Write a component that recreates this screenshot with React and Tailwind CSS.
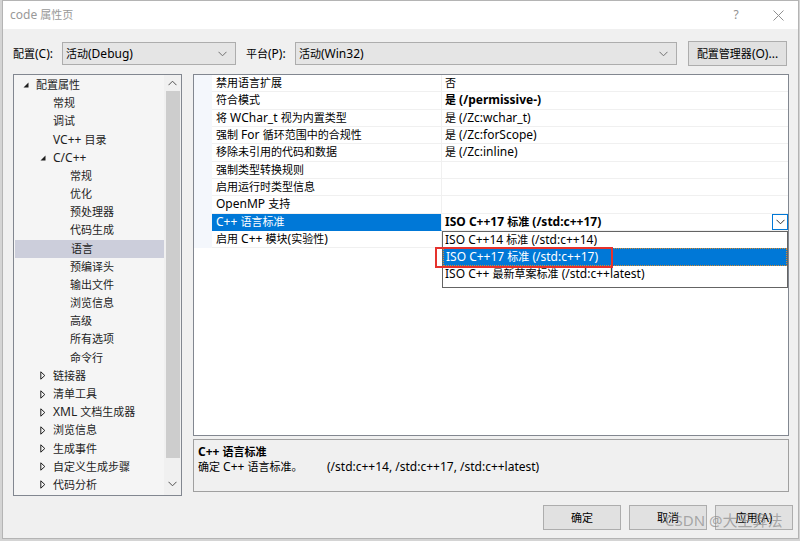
import React from "react";

const FONT = "font-['Noto_Sans','Noto_Sans_CJK_SC',sans-serif]";

function T({ children }) {
  const s = String(children);
  const parts = s.split(/([\u3000-\u303f\u4e00-\u9fff\uff00-\uffef]+)/);
  return (
    <>
      {parts.map((p, i) =>
        p === "" ? null : /[\u3000-\u303f\u4e00-\u9fff\uff00-\uffef]/.test(p) ? (
          <span key={i} className="text-[11px]">{p}</span>
        ) : (
          <span key={i}>{p}</span>
        )
      )}
    </>
  );
}

const tree = [
  { t: "配置属性", l: 0, a: "open" },
  { t: "常规", l: 1 },
  { t: "调试", l: 1 },
  { t: "VC++ 目录", l: 1 },
  { t: "C/C++", l: 1, a: "open" },
  { t: "常规", l: 2 },
  { t: "优化", l: 2 },
  { t: "预处理器", l: 2 },
  { t: "代码生成", l: 2 },
  { t: "语言", l: 2, sel: true },
  { t: "预编译头", l: 2 },
  { t: "输出文件", l: 2 },
  { t: "浏览信息", l: 2 },
  { t: "高级", l: 2 },
  { t: "所有选项", l: 2 },
  { t: "命令行", l: 2 },
  { t: "链接器", l: 1, a: "closed" },
  { t: "清单工具", l: 1, a: "closed" },
  { t: "XML 文档生成器", l: 1, a: "closed" },
  { t: "浏览信息", l: 1, a: "closed" },
  { t: "生成事件", l: 1, a: "closed" },
  { t: "自定义生成步骤", l: 1, a: "closed" },
  { t: "代码分析", l: 1, a: "closed" },
];

const indent = ["ml-[9px]", "ml-[26px]", "ml-[43px]"];

const props = [
  { n: "禁用语言扩展", v: "否" },
  { n: "符合模式", v: "是 (/permissive-)", b: true },
  { n: "将 WChar_t 视为内置类型", v: "是 (/Zc:wchar_t)" },
  { n: "强制 For 循环范围中的合规性", v: "是 (/Zc:forScope)" },
  { n: "移除未引用的代码和数据", v: "是 (/Zc:inline)" },
  { n: "强制类型转换规则", v: "" },
  { n: "启用运行时类型信息", v: "" },
  { n: "OpenMP 支持", v: "" },
  { n: "C++ 语言标准", v: "ISO C++17 标准 (/std:c++17)", b: true, sel: true },
  { n: "启用 C++ 模块(实验性)", v: "" },
];

function Chevron({ className = "", color = "#606060" }) {
  return (
    <svg width="9" height="6" viewBox="0 0 9 6" className={className}>
      <polyline points="0.5,0.8 4.5,4.8 8.5,0.8" fill="none" stroke={color} strokeWidth="1" />
    </svg>
  );
}

function OpenArrow() {
  return (
    <svg width="6" height="6" viewBox="0 0 6 6">
      <polygon points="5.5,0.5 5.5,5.5 0.5,5.5" fill="#1e1e1e" />
    </svg>
  );
}

function ClosedArrow() {
  return (
    <svg width="6" height="9" viewBox="0 0 6 9">
      <polygon points="0.8,0.8 4.8,4.5 0.8,8.2" fill="none" stroke="#1e1e1e" strokeWidth="1" />
    </svg>
  );
}

function Select({ w, text }) {
  return (
    <div className={`${w} h-[23px] bg-[#e5e5e5] border border-[#adadad] flex items-center pl-[3px] text-[12px] text-black`}>
      <span className="flex-1 leading-none"><T>{text}</T></span>
      <Chevron className="mr-[8px]" color="#707070" />
    </div>
  );
}

function Button({ w, children }) {
  return (
    <div className={`${w} h-[25px] bg-[#e1e1e1] border border-[#adadad] flex items-center justify-center text-[12px] text-black leading-none`}>
      <T>{children}</T>
    </div>
  );
}

export default function App() {
  return (
    <div className={`w-[800px] h-[541px] bg-[#d4d4d4] pl-[2px] overflow-hidden ${FONT}`}>
      <div className="relative w-[797px] h-[539px] border border-[#b4b4b4] bg-[#f0f0f0] flex flex-col">
        {/* title bar */}
        <div className="h-[28px] bg-white flex items-center pl-[7px] pr-[14px] text-[12px] text-[#999999]">
          <span className="flex-1 leading-none"><T>code 属性页</T></span>
          <span className="w-[14px] text-center leading-none mr-[30px] text-[#909090]">?</span>
          <svg width="11" height="11" viewBox="0 0 11 11">
            <path d="M0.5 0.5 L10.5 10.5 M10.5 0.5 L0.5 10.5" stroke="#909090" strokeWidth="1" />
          </svg>
        </div>

        {/* body */}
        <div className="flex-1 flex flex-col pl-[10px] pr-[9px] pt-[12px]">
          {/* header */}
          <div className="flex items-center h-[25px] text-[12px]">
            <span className="w-[49px] leading-none text-black"><T>配置(C):</T></span>
            <Select w="w-[174px]" text="活动(Debug)" />
            <span className="w-[49px] ml-[10px] leading-none text-black"><T>平台(P):</T></span>
            <Select w="w-[382px]" text="活动(Win32)" />
            <div className="ml-[11px]">
              <Button w="w-[99px]">配置管理器(O)...</Button>
            </div>
          </div>

          {/* main */}
          <div className="flex mt-[8px] h-[422px]">
            {/* tree */}
            <div className="w-[169px] h-full border border-[#828790] bg-[#f5f5f5] flex">
              <div className="flex-1 flex flex-col text-[12px] text-[#1e1e1e] pt-[1px]">
                {tree.map((it, i) => (
                  <div
                    key={i}
                    className={`h-[18.18px] flex items-center shrink-0 ${it.sel ? "bg-[#cccedb] ml-[1px]" : ""}`}
                  >
                    <div className={`${indent[it.l]} w-[13px] flex items-center ${it.sel ? "-ml-[1px]" : ""}`}>
                      {it.a === "open" && <OpenArrow />}
                      {it.a === "closed" && <ClosedArrow />}
                    </div>
                    <span className="leading-none whitespace-nowrap"><T>{it.t}</T></span>
                  </div>
                ))}
              </div>
              <div className="w-[17px] h-full bg-[#f0f0f0] flex flex-col items-center">
                <div className="h-[16px] w-full flex items-center justify-center">
                  <Chevron className="rotate-180" color="#505050" />
                </div>
                <div className="w-[14px] h-[367px] bg-[#cdcdcd]" />
                <div className="flex-1" />
                <div className="h-[22px] w-full flex items-center justify-center">
                  <Chevron color="#505050" />
                </div>
              </div>
            </div>

            {/* right column */}
            <div className="ml-[11px] flex-1 flex flex-col">
              {/* property grid */}
              <div className="relative h-[362px] border border-[#828790] bg-white flex flex-col text-[12px] text-black">
                {props.map((p, i) => (
                  <div key={i} className="h-[17.33px] flex shrink-0">
                    <div className="w-[18px] bg-[#f4f7fc]" />
                    <div
                      className={`w-[230px] flex items-center pl-[4px] border-b border-r border-[#f0f0f0] ${
                        p.sel ? "bg-[#0078d7] text-white border-b-[#0078d7]" : ""
                      }`}
                    >
                      <span className="leading-none whitespace-nowrap"><T>{p.n}</T></span>
                    </div>
                    <div className="relative flex-1 flex items-center pl-[3px] border-b border-[#f0f0f0]">
                      <span className={`leading-none whitespace-nowrap ${p.b ? "font-bold" : ""}`}><T>{p.v}</T></span>
                      {p.sel && (
                        <div className="absolute right-0 top-0 w-[16px] h-[16px] border border-[#0078d7] bg-white flex items-center justify-center">
                          <Chevron color="#303030" />
                        </div>
                      )}
                    </div>
                  </div>
                ))}

                {/* dropdown popup */}
                <div className="absolute left-[248px] top-[156px] w-[346px] h-[57px] bg-white border border-[#646464] flex flex-col text-[12px]">
                  <div className="h-[16px] flex items-center pl-[2px]">
                    <span className="leading-none"><T>ISO C++14 标准 (/std:c++14)</T></span>
                  </div>
                  <div className="h-[18px] flex items-center pl-[2px] bg-[#0078d7] text-white border border-dotted border-[#d98a2b]">
                    <span className="leading-none"><T>ISO C++17 标准 (/std:c++17)</T></span>
                  </div>
                  <div className="h-[16px] flex items-center pl-[2px]">
                    <span className="leading-none"><T>ISO C++ 最新草案标准 (/std:c++latest)</T></span>
                  </div>
                </div>

                {/* red annotation box */}
                <div className="absolute left-[241px] top-[172px] w-[178px] h-[21px] border-2 border-[#e5322d]" />
              </div>

              {/* description */}
              <div className="mt-[3px] h-[53px] border border-[#a0a0a0] bg-[#f0f0f0] flex flex-col pl-[4px] text-[12px] text-black">
                <div className="h-[18px] flex items-end">
                  <span className="font-bold leading-none"><T>C++ 语言标准</T></span>
                </div>
                <div className="h-[18px] flex items-center">
                  <span className="w-[129px] leading-none whitespace-nowrap"><T>确定 C++ 语言标准。</T></span>
                  <span className="leading-none whitespace-nowrap">(/std:c++14, /std:c++17, /std:c++latest)</span>
                </div>
              </div>
            </div>
          </div>

          {/* buttons */}
          <div className="flex mt-[9px] pl-[530px] -mr-[4px] gap-[8px]">
            <Button w="w-[78px]">确定</Button>
            <Button w="w-[78px]">取消</Button>
            <Button w="w-[78px]">应用(A)</Button>
          </div>
        </div>

        {/* watermark */}
        <div className="absolute left-[662px] top-[512px] text-[15px] leading-none text-[#8a8a8a]/70 whitespace-nowrap pointer-events-none">
          CSDN @大王算法
        </div>
      </div>
    </div>
  );
}
